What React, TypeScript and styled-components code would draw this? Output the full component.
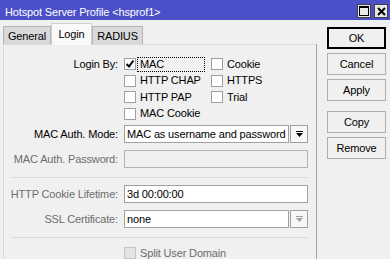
import styled, { createGlobalStyle } from 'styled-components';

const GlobalStyle = createGlobalStyle`
    html, body {
        margin: 0;
        padding: 0;
        background: #f0f0f0;
    }
    body {
        width: 390px;
        height: 259px;
        overflow: hidden;
        font-family: "Liberation Sans", Arial, sans-serif;
        font-size: 11px;
        letter-spacing: -0.15px;
        color: #000;
    }
    * { box-sizing: border-box; }
`;

const loginMethods = [
    { label: 'MAC', checked: true, focused: true },
    { label: 'Cookie' },
    { label: 'HTTP CHAP' },
    { label: 'HTTPS' },
    { label: 'HTTP PAP' },
    { label: 'Trial' },
    { label: 'MAC Cookie' },
];

const DropIcon = ({ disabled }: { disabled?: boolean }) => (
    <svg width="7" height="7" viewBox="0 0 7 7">
        <g fill={disabled ? '#a0a0a0' : '#000'}>
            <rect x="0" y="0" width="7" height="1" />
            <polygon points="0,2 7,2 3.5,6" />
        </g>
    </svg>
);

export default function App() {
    return (
        <Window>
            <GlobalStyle />
            <TitleBar>
                <Title>Hotspot Server Profile &lt;hsprof1&gt;</Title>
                <WinButtons>
                    <WinButton>
                        <svg width="10" height="10" viewBox="0 0 10 10">
                            <rect x="0.5" y="0.5" width="9" height="9" fill="none" stroke="#000" />
                            <rect x="0" y="0" width="10" height="2" fill="#000" />
                        </svg>
                    </WinButton>
                    <WinButton>
                        <svg width="9" height="9" viewBox="0 0 9 9">
                            <path d="M1 1 L8 8 M8 1 L1 8" stroke="#000" strokeWidth="2" />
                        </svg>
                    </WinButton>
                </WinButtons>
            </TitleBar>

            <Body>
                <LeftSide>
                    <TabRow>
                        <Tab $width={48}>General</Tab>
                        <Tab $width={41} $active>Login</Tab>
                        <Tab $width={51}>RADIUS</Tab>
                    </TabRow>
                    <Panel>
                        <Row>
                            <Label $lh={16.5}>Login By:</Label>
                            <CheckGrid>
                                {loginMethods.map((m) => (
                                    <CheckItem key={m.label}>
                                        <Box>{m.checked && <Tick />}</Box>
                                        <CheckLabel $focused={m.focused}>{m.label}</CheckLabel>
                                    </CheckItem>
                                ))}
                            </CheckGrid>
                        </Row>

                        <Row $top={3}>
                            <Label>MAC Auth. Mode:</Label>
                            <Combo>
                                <Field>MAC as username and password</Field>
                                <DropButton><DropIcon /></DropButton>
                            </Combo>
                        </Row>

                        <Row $top={7}>
                            <Label $disabled>MAC Auth. Password:</Label>
                            <Field $disabled />
                        </Row>

                        <Separator />

                        <Row $top={7}>
                            <Label $disabled>HTTP Cookie Lifetime:</Label>
                            <Field>3d 00:00:00</Field>
                        </Row>

                        <Row $top={7}>
                            <Label $disabled>SSL Certificate:</Label>
                            <Combo>
                                <Field>none</Field>
                                <DropButton><DropIcon disabled /></DropButton>
                            </Combo>
                        </Row>

                        <Separator />

                        <Row $top={7}>
                            <span />
                            <CheckItem>
                                <Box $disabled />
                                <CheckLabel $disabled>Split User Domain</CheckLabel>
                            </CheckItem>
                        </Row>
                    </Panel>
                </LeftSide>

                <ButtonColumn>
                    <Button $default>OK</Button>
                    <Button>Cancel</Button>
                    <Button>Apply</Button>
                    <Button $gap>Copy</Button>
                    <Button>Remove</Button>
                </ButtonColumn>
            </Body>
        </Window>
    );
}

const Tick = () => (
    <svg width="10" height="10" viewBox="0 0 10 10">
        <path d="M1.5 5 L4 7.5 L8.5 1.5" fill="none" stroke="#000" strokeWidth="2" />
    </svg>
);

const Window = styled.div`
    width: 390px;
    height: 259px;
    display: flex;
    flex-direction: column;
    overflow: hidden;
`;

const TitleBar = styled.div`
    height: 20px;
    flex: none;
    background: #4b4fc8;
    display: flex;
    align-items: flex-start;
    padding: 0 2px 0 5px;
`;

const Title = styled.div`
    flex: 1;
    color: #fff;
    padding-top: 6px;
    line-height: 13px;
    white-space: nowrap;
`;

const WinButtons = styled.div`
    display: flex;
    gap: 3px;
    margin-top: 4px;
`;

const WinButton = styled.div`
    width: 14px;
    height: 14px;
    background: #e8e8e8;
    border: 1px solid #404040;
    display: flex;
    align-items: center;
    justify-content: center;
`;

const Body = styled.div`
    flex: 1;
    display: flex;
    padding: 3px 0 0 3px;
`;

const LeftSide = styled.div`
    width: 314px;
    display: flex;
    flex-direction: column;
`;

const TabRow = styled.div`
    height: 22px;
    display: flex;
    align-items: flex-start;
    position: relative;
    z-index: 1;
`;

const Tab = styled.div<{ $width: number; $active?: boolean }>`
    width: ${(p) => p.$width}px;
    height: ${(p) => (p.$active ? 22 : 18)}px;
    margin-top: ${(p) => (p.$active ? 0 : 3)}px;
    padding-top: ${(p) => (p.$active ? 3 : 2)}px;
    line-height: 14px;
    text-align: center;
    background: ${(p) => (p.$active ? '#f9f9f9' : '#d9d9d9')};
    border: 1px solid ${(p) => (p.$active ? '#d0d0d0' : '#b4b4b4')};
    border-bottom: none;
    white-space: nowrap;
`;

const Panel = styled.div`
    margin-top: -1px;
    flex: 1;
    min-height: 230px;
    border: 1px solid #d9d9d9;
    border-right-color: #a0a0a0;
    padding: 11px 8px 0 0;
`;

const Row = styled.div<{ $top?: number }>`
    display: grid;
    grid-template-columns: 116px 184px;
    column-gap: 4px;
    align-items: start;
    margin-top: ${(p) => p.$top ?? 0}px;
`;

const Label = styled.div<{ $disabled?: boolean; $lh?: number }>`
    text-align: right;
    padding-right: 2px;
    line-height: ${(p) => p.$lh ?? 18}px;
    color: ${(p) => (p.$disabled ? '#6d6d6d' : '#000')};
    white-space: nowrap;
`;

const CheckGrid = styled.div`
    display: grid;
    grid-template-columns: 87px 1fr;
    grid-auto-rows: 16.5px;
`;

const CheckItem = styled.div`
    display: flex;
    align-items: center;
    height: 16.5px;
`;

const Box = styled.div<{ $disabled?: boolean }>`
    width: 12px;
    height: 12px;
    flex: none;
    border: 1px solid ${(p) => (p.$disabled ? '#c4c4c4' : '#a0a0a0')};
    background: ${(p) => (p.$disabled ? '#e4e4e4' : '#fff')};
    display: flex;
    align-items: center;
    justify-content: center;
`;

const CheckLabel = styled.span<{ $focused?: boolean; $disabled?: boolean }>`
    margin-left: 1px;
    padding-left: 2px;
    line-height: 13px;
    border: 1px ${(p) => (p.$focused ? 'dotted #000' : 'solid transparent')};
    flex: ${(p) => (p.$focused ? 1 : 'none')};
    margin-right: 6px;
    color: ${(p) => (p.$disabled ? '#6d6d6d' : '#000')};
    white-space: nowrap;
`;

const Combo = styled.div`
    display: flex;
    gap: 1px;
`;

const Field = styled.div<{ $disabled?: boolean }>`
    flex: 1;
    height: 18px;
    line-height: 16px;
    padding-left: 2px;
    border: 1px solid ${(p) => (p.$disabled ? '#b4b4b4' : '#a0a0a0')};
    background: ${(p) => (p.$disabled ? '#f0f0f0' : '#fff')};
    white-space: nowrap;
    overflow: hidden;
`;

const DropButton = styled.div`
    width: 18px;
    height: 18px;
    flex: none;
    border: 1px solid #a0a0a0;
    background: #f7f7f7;
    display: flex;
    align-items: center;
    justify-content: center;
`;

const Separator = styled.div`
    margin: 9px 0 0 7px;
    height: 1px;
    background: #d9d9d9;
`;

const ButtonColumn = styled.div`
    width: 59px;
    margin-left: 10px;
    padding-top: 4px;
    display: flex;
    flex-direction: column;
    gap: 4px;
`;

const Button = styled.div<{ $default?: boolean; $gap?: boolean }>`
    height: 22px;
    line-height: 20px;
    text-align: center;
    border: 1px solid ${(p) => (p.$default ? '#000' : '#adadad')};
    box-shadow: ${(p) => (p.$default ? 'inset 0 0 0 1px #000' : 'none')};
    background: #f0f0f0;
    margin-top: ${(p) => (p.$gap ? 6 : 0)}px;
`;
